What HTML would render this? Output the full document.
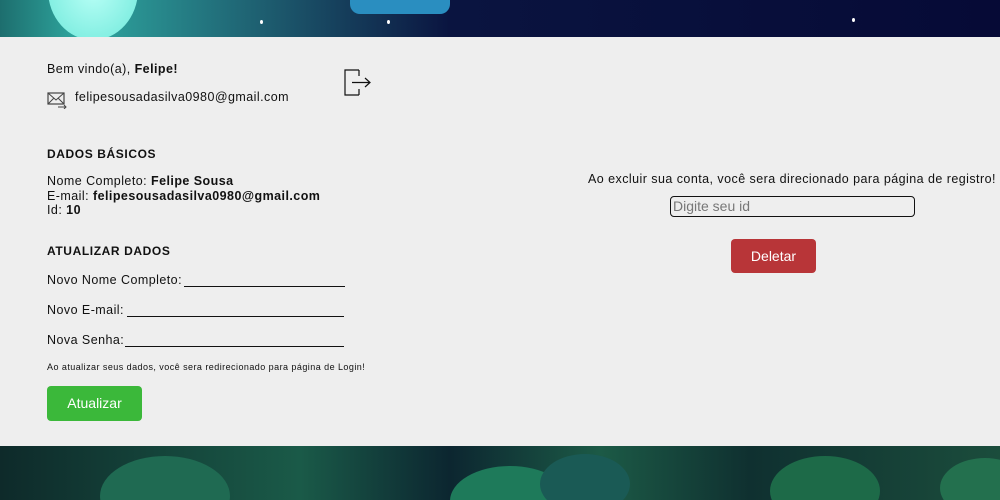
<!DOCTYPE html>
<html><head><meta charset="utf-8"><style>
*{margin:0;padding:0;box-sizing:border-box}
html,body{width:1000px;height:500px;overflow:hidden}
body{position:relative;font-family:"Liberation Sans",sans-serif;color:#111;font-size:12.5px;letter-spacing:.45px}
.top{position:absolute;left:0;top:0;width:1000px;height:37px;overflow:hidden;background:linear-gradient(90deg,#1d6e6e 0%,#2fa8a0 8%,#1a4f66 30%,#0a1440 45%,#060a36 100%)}
.moon{position:absolute;left:48px;top:-60px;width:90px;height:100px;border-radius:50%;background:radial-gradient(#b8fff6,#6ee8da);}
.bot{position:absolute;left:0;top:446px;width:1000px;height:54px;overflow:hidden;background:linear-gradient(90deg,#0e2a2a,#1a5a48 30%,#0c2630 45%,#1c5a46 60%,#0f3030 75%,#1b4d3c 100%)}
.panel{position:absolute;left:0;top:37px;width:1000px;height:409px;background:#eeeeee}
.a{position:absolute;white-space:nowrap}
b{font-weight:bold}
.h{font-weight:bold;font-size:12px;letter-spacing:.6px}
.line{position:absolute;height:1px;background:#111}
.btn{position:absolute;color:#fff;font-size:14px;letter-spacing:0;text-align:center;border-radius:4px}
</style></head><body>
<div class="top"><div class="moon"></div>
<div style="position:absolute;left:260px;top:20px;width:3px;height:4px;background:#fff;border-radius:50%"></div>
<div style="position:absolute;left:387px;top:20px;width:3px;height:4px;background:#fff;border-radius:50%"></div>
<div style="position:absolute;left:852px;top:18px;width:3px;height:4px;background:#fff;border-radius:50%"></div>
<div style="position:absolute;left:350px;top:0;width:100px;height:14px;background:#2a8ec0;border-radius:0 0 10px 10px"></div>
</div>
<div class="panel">
<div class="a" style="left:47px;top:25px">Bem vindo(a), <b>Felipe!</b></div>
<svg class="a" style="left:47px;top:54px" width="20" height="18" viewBox="0 0 20 18"><rect x="1" y="2" width="16" height="11" fill="none" stroke="#444" stroke-width="1.2"/><path d="M1 2 L9 9 L17 2 M1 13 L7 7 M17 13 L11 7" fill="none" stroke="#444"/><path d="M11 16 H19 M17 14 L19 16 L17 18" fill="none" stroke="#444"/></svg>
<div class="a" style="left:75px;top:53px">felipesousadasilva0980@gmail.com</div>
<svg class="a" style="left:344px;top:32px" width="28" height="28" viewBox="0 0 28 28"><path d="M15 1 H1 V26 H15 M15 1 V7 M15 26 V20 M8 13.5 H26 M21 9 L26 13.5 L21 18" fill="none" stroke="#111" stroke-width="1.2"/></svg>
<div class="a h" style="left:47px;top:110px">DADOS BÁSICOS</div>
<div class="a" style="left:47px;top:137px;line-height:14.5px">Nome Completo: <b>Felipe Sousa</b><br>E-mail: <b>felipesousadasilva0980@gmail.com</b><br>Id: <b>10</b></div>
<div class="a h" style="left:47px;top:207px">ATUALIZAR DADOS</div>
<div class="a" style="left:47px;top:236px">Novo Nome Completo:</div><div class="line" style="left:184px;top:249px;width:161px"></div>
<div class="a" style="left:47px;top:266px">Novo E-mail:</div><div class="line" style="left:127px;top:279px;width:217px"></div>
<div class="a" style="left:47px;top:296px">Nova Senha:</div><div class="line" style="left:125px;top:309px;width:219px"></div>
<div class="a" style="left:47px;top:325px;font-size:9px">Ao atualizar seus dados, você sera redirecionado para página de Login!</div>
<div class="btn" style="left:47px;top:349px;width:95px;height:35px;line-height:35px;background:#3bb83a">Atualizar</div>
<div class="a" style="left:588px;top:135px">Ao excluir sua conta, você sera direcionado para página de registro!</div>
<div class="a" style="left:670px;top:159px;width:245px;height:21px;border:1px solid #111;border-radius:4px;color:#777;font-size:14px;letter-spacing:0;line-height:19px;padding-left:2px">Digite seu id</div>
<div class="btn" style="left:731px;top:202px;width:85px;height:34px;line-height:34px;background:#b83538">Deletar</div>
</div>
<div class="bot">
<div style="position:absolute;left:100px;top:10px;width:130px;height:80px;border-radius:50%;background:#1f6a52"></div>
<div style="position:absolute;left:450px;top:20px;width:120px;height:70px;border-radius:50%;background:#1e7a5a"></div>
<div style="position:absolute;left:540px;top:8px;width:90px;height:60px;border-radius:50%;background:#1a5a55"></div>
<div style="position:absolute;left:770px;top:10px;width:110px;height:70px;border-radius:50%;background:#1d6a48"></div>
<div style="position:absolute;left:940px;top:12px;width:90px;height:60px;border-radius:50%;background:#23704e"></div>
</div>
</body></html>
